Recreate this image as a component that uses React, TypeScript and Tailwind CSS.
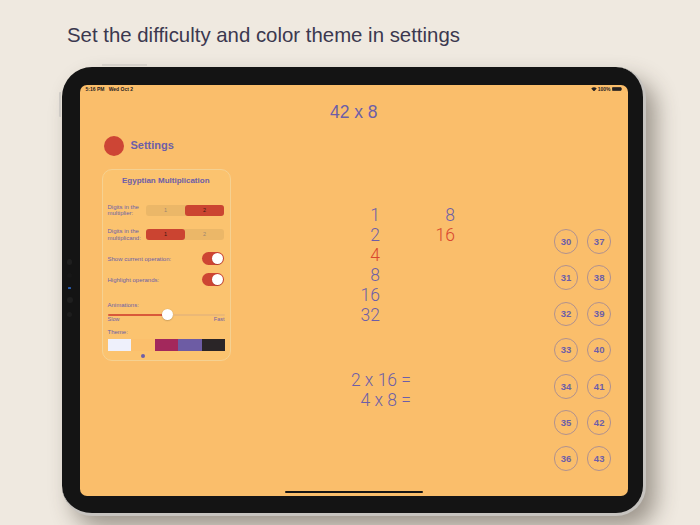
import React from 'react';

const swatches = ['#eef0fb', '#fbbf6c', '#a3285c', '#6d5ca4', '#2a2527'];

const leftNums = [
  { v: '1', red: false },
  { v: '2', red: false },
  { v: '4', red: true },
  { v: '8', red: false },
  { v: '16', red: false },
  { v: '32', red: false },
];

const rightNums = [
  { v: '8', red: false },
  { v: '16', red: true },
];

// circles go down the left column first, then the right one
const circleNums: number[] = [];
for (let i = 0; i < 7; i++) {
  circleNums.push(30 + i, 37 + i);
}

const Segmented = ({ selected }: { selected: 0 | 1 }) => (
  <div className="flex h-[11px] w-[78px] rounded-[3px] bg-[#ebb768] text-[5.5px] leading-none">
    {['1', '2'].map((label, i) => (
      <div
        key={label}
        className={`flex flex-1 items-center justify-center rounded-[3px] ${
          i === selected ? 'bg-[#cb4431] text-[#3b1812]' : 'text-[#9c8570]'
        }`}
      >
        {label}
      </div>
    ))}
  </div>
);

const Toggle = () => (
  <div className="flex h-[13px] w-[22px] items-center justify-end rounded-full bg-[#cd4533] pr-[1.2px]">
    <div className="h-[10.6px] w-[10.6px] rounded-full bg-white shadow-[0_0.5px_1px_rgba(0,0,0,0.25)]" />
  </div>
);

const StatusBar = () => (
  <div className="mt-[1.5px] flex h-[5px] items-center justify-between px-[6px] text-[5px] font-bold leading-none text-[#262222]">
    <div className="flex gap-[4.3px]">
      <span>5:16 PM</span>
      <span>Wed Oct 2</span>
    </div>
    <div className="flex items-center gap-[1px]">
      <svg width="6" height="4.5" viewBox="0 0 12 9">
        <path d="M6 9 L0.5 3.2 A8 8 0 0 1 11.5 3.2 Z" fill="#262222" />
      </svg>
      <span>100%</span>
      <svg width="10.5" height="4" viewBox="0 0 21 8">
        <rect x="0.5" y="0.5" width="18" height="7" rx="2" fill="#262222" stroke="#262222" />
        <rect x="19.2" y="2.5" width="1.6" height="3" rx="0.6" fill="#262222" />
      </svg>
    </div>
  </div>
);

const SettingsColumn = () => (
  <div className="ml-[22.5px] w-[129px] shrink-0">
    <div className="flex h-[20px] items-center">
      <div className="ml-[2px] h-[20px] w-[20px] rounded-full bg-[#cd4535]" />
      <span className="ml-[6.5px] text-[11px] font-bold leading-none text-[#6d5ea8]">Settings</span>
    </div>

    <div className="mt-[13px] h-[192px] rounded-[10px] border border-[#f5d191] bg-[#fbc36f] pl-[4.5px] pr-[6px] text-[#6d5ea8]">
      <div className="pt-[6.7px] text-center text-[8px] font-bold leading-none">Egyptian Multiplication</div>

      <div className="mt-[19.3px] flex h-[13px] items-center justify-between">
        <div className="text-[6px] leading-[6.5px]">
          Digits in the
          <br />
          multiplier:
        </div>
        <Segmented selected={1} />
      </div>

      <div className="mt-[11.2px] flex h-[13px] items-center justify-between">
        <div className="text-[6px] leading-[6.5px]">
          Digits in the
          <br />
          multiplicand:
        </div>
        <Segmented selected={0} />
      </div>

      <div className="mt-[11.1px] flex h-[13px] items-center justify-between">
        <span className="text-[6px] leading-none">Show current operation:</span>
        <Toggle />
      </div>

      <div className="mt-[8px] flex h-[13px] items-center justify-between">
        <span className="text-[6px] leading-none">Highlight operands:</span>
        <Toggle />
      </div>

      {/* animation speed */}
      <div className="mt-[15.4px] text-[6px] leading-none">Animations:</div>
      <div className="mt-[1.6px] flex h-[11px] w-[117px] items-center">
        <div className="h-[2px] w-[54px] rounded-l-full bg-[#d9593a]" />
        <div className="h-[11px] w-[11px] shrink-0 rounded-full bg-white shadow-[0_0.5px_1.5px_rgba(0,0,0,0.3)]" />
        <div className="h-[2px] flex-1 rounded-r-full bg-[#ebb876]" />
      </div>
      <div className="-mt-[3px] flex w-[117px] justify-between text-[5.5px] leading-none">
        <span>Slow</span>
        <span>Fast</span>
      </div>

      {/* theme */}
      <div className="mt-[6.5px] text-[6px] leading-none">Theme:</div>
      <div className="ml-[0.5px] mt-[3.7px] flex h-[11.6px] w-[117px]">
        {swatches.map((c) => (
          <div key={c} className="flex-1" style={{ backgroundColor: c }} />
        ))}
      </div>
      <div className="ml-[0.5px] mt-[3.9px] flex w-[117px]">
        {swatches.map((c, i) => (
          <div key={c} className="flex flex-1 justify-center">
            {i === 1 && <div className="h-[3.5px] w-[3.5px] rounded-full bg-[#6d5ea8]" />}
          </div>
        ))}
      </div>
    </div>
  </div>
);

const Center = () => (
  <div className="flex-1 pt-[68.8px] font-['Roboto','Liberation_Sans',sans-serif] text-[17.5px] font-light leading-[20px] text-[#6d5ea8]">
    <div className="ml-[109px] flex">
      <div className="w-[40px] text-right">
        {leftNums.map((n, i) => (
          <div key={i} className={n.red ? 'text-[#d9482f]' : ''}>
            {n.v}
          </div>
        ))}
      </div>
      <div className="w-[75px] text-right">
        {rightNums.map((n, i) => (
          <div key={i} className={n.red ? 'text-[#d9482f]' : ''}>
            {n.v}
          </div>
        ))}
      </div>
    </div>
    <div className="mt-[45px] w-[180px] text-right">
      <div>2 x 16 =</div>
      <div>4 x 8 =</div>
    </div>
  </div>
);

const Circles = () => (
  <div className="mr-[16.6px] grid grid-cols-[24.5px_24.5px] gap-x-[8.7px] gap-y-[11.7px] pt-[93.3px]">
    {circleNums.map((n) => (
      <div
        key={n}
        className="flex h-[24.5px] w-[24.5px] items-center justify-center rounded-full border border-[#b0918f] text-[9.5px] font-bold leading-none text-[#6d5ea8]"
      >
        {n}
      </div>
    ))}
  </div>
);

const Screen = () => (
  <div className="flex h-full w-full flex-col overflow-hidden rounded-[7px] bg-[#fabe6b]">
    <StatusBar />
    <div className="mt-[12.9px] text-center text-[17.5px] leading-none text-[#6d5ea8]">42 x 8</div>
    <div className="mt-[14.1px] flex">
      <SettingsColumn />
      <Center />
      <Circles />
    </div>
    <div className="mx-auto mb-[3px] mt-auto h-[2.5px] w-[138px] rounded-full bg-[#151515]" />
  </div>
);

export default function App() {
  return (
    <div className="h-[525px] w-[700px] overflow-hidden bg-[#efe9e0] font-['Liberation_Sans',Arial,sans-serif]">
      <h1 className="pl-[67px] pt-[25px] text-[20.4px] font-normal leading-none text-[#3b384f]">
        Set the difficulty and color theme in settings
      </h1>

      <div className="relative ml-[62px] mt-[21.6px] h-[449px] w-[584px] rounded-[30px] border-b-[3px] border-r-[3px] border-[#c6c3bf] bg-[#141414] pb-[17px] pl-[17.5px] pr-[15px] pt-[18px] shadow-[10px_12px_22px_rgba(60,50,40,0.45)]">
        {/* hardware buttons */}
        <div className="absolute left-[-3px] top-[25px] h-[25px] w-[2px] rounded-l-[1px] bg-[#cfcbc6]" />
        <div className="absolute left-[40px] top-[-3px] h-[1.5px] w-[45px] bg-[#d6d1ca]" />

        {/* front camera / sensors on the bezel */}
        <div className="absolute left-[4.5px] top-[192px] flex w-[6px] flex-col items-center gap-[8.5px]">
          <div className="h-[5.5px] w-[5.5px] rounded-full bg-[#1f1f1f]" />
          <div className="h-[5px] w-[5px] rounded-full bg-[#171717]" />
          <div className="h-[2px] w-[3px] rounded-[0.5px] bg-[#2a5db0]" />
          <div className="h-[6px] w-[6px] rounded-full bg-[#1f1f1f]" />
          <div className="h-[5.5px] w-[5.5px] rounded-full bg-[#1d1d1d]" />
        </div>

        <Screen />
      </div>
    </div>
  );
}
